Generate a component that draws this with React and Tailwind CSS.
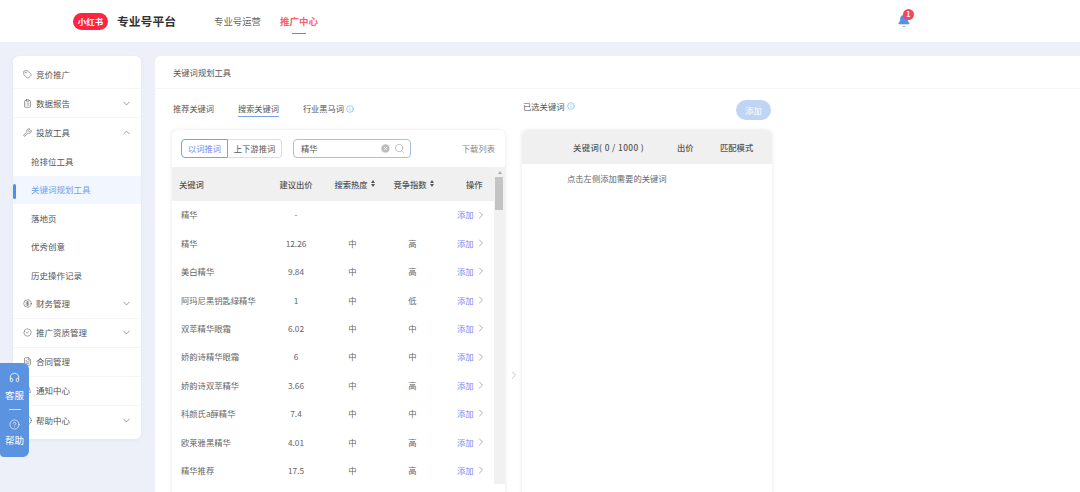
import { ChevronDown, ChevronRight, ChevronUp, Search, Headphones, CircleHelp, Info, Tag, ClipboardList, Wrench, CircleDollarSign, BadgeCheck, FileText, Bell, CircleX } from 'lucide-react';

const rows = [
  ['精华', '-', '', ''],
  ['精华', '12.26', '中', '高'],
  ['美白精华', '9.84', '中', '高'],
  ['阿玛尼黑钥匙绿精华', '1', '中', '低'],
  ['双萃精华眼霜', '6.02', '中', '中'],
  ['娇韵诗精华眼霜', '6', '中', '中'],
  ['娇韵诗双萃精华', '3.66', '中', '高'],
  ['科颜氏a醇精华', '7.4', '中', '中'],
  ['欧莱雅黑精华', '4.01', '中', '高'],
  ['精华推荐', '17.5', '中', '高'],
];

function MenuItem({ icon: Icon, label, arrow, noLine }) {
  return (
    <div className={`flex h-[29px] items-center pl-[10px] pr-[9px] text-[#555] ${noLine ? '' : 'border-b border-[#f4f5f8]'}`}>
      <Icon size={9} strokeWidth={1.5} className="mr-[4px] shrink-0" />
      <span className="flex-1">{label}</span>
      {arrow === 'down' && <ChevronDown size={11} strokeWidth={1.4} className="text-[#666]" />}
      {arrow === 'up' && <ChevronUp size={11} strokeWidth={1.4} className="text-[#666]" />}
    </div>
  );
}

function SubItem({ label, active }) {
  return (
    <div className={`relative flex h-[28.5px] items-center pl-[18px] ${active ? 'bg-[#f2f6fe] text-[#6f9ee8]' : 'text-[#555]'}`}>
      {active && <span className="absolute left-0 top-[8px] h-[15px] w-[3px] rounded-sm bg-[#4f8fe8]" />}
      {label}
    </div>
  );
}

function Sidebar() {
  return (
    <aside className="h-[383px] w-[128px] shrink-0 rounded-md bg-white pt-[4px] text-[8.5px] shadow-[0_1px_4px_rgba(40,60,110,0.06)]">
      <MenuItem icon={Tag} label="竞价推广" />
      <MenuItem icon={ClipboardList} label="数据报告" arrow="down" />
      <MenuItem icon={Wrench} label="投放工具" arrow="up" noLine />
      <SubItem label="抢排位工具" />
      <SubItem label="关键词规划工具" active />
      <SubItem label="落地页" />
      <SubItem label="优秀创意" />
      <SubItem label="历史操作记录" />
      <MenuItem icon={CircleDollarSign} label="财务管理" arrow="down" />
      <MenuItem icon={BadgeCheck} label="推广资质管理" arrow="down" />
      <MenuItem icon={FileText} label="合同管理" />
      <MenuItem icon={Bell} label="通知中心" />
      <MenuItem icon={CircleHelp} label="帮助中心" arrow="down" noLine />
    </aside>
  );
}

function SortIcon() {
  return (
    <span className="flex flex-col gap-[1px]">
      <span className="h-0 w-0 border-x-[2.5px] border-b-[3px] border-x-transparent border-b-[#555]" />
      <span className="h-0 w-0 border-x-[2.5px] border-t-[3px] border-x-transparent border-t-[#555]" />
    </span>
  );
}

function KeywordTable() {
  return (
    <div className="flex">
      <div className="w-[322px]">
        <div className="grid h-[33.5px] grid-cols-[98px_52px_61px_59px_52px] items-center bg-[#f0f0f0] font-medium text-[#555]">
          <span className="pl-[7px]">关键词</span>
          <span className="text-center">建议出价</span>
          <span className="flex items-center justify-center gap-[3px] pl-[4px]">搜索热度<SortIcon /></span>
          <span className="flex items-center justify-center gap-[3px] pl-[2px]">竞争指数<SortIcon /></span>
          <span className="pl-[24px]">操作</span>
        </div>
        {rows.map((r, i) => (
          <div key={i} className="grid h-[28.4px] grid-cols-[98px_52px_61px_59px_52px] items-center text-[#666]">
            <span className="whitespace-nowrap pl-[9px]">{r[0]}</span>
            <span className="text-center">{r[1]}</span>
            <span className="text-center">{r[2]}</span>
            <span className="text-center">{r[3]}</span>
            <span className="flex items-center pl-[15px] text-[#7b86f2]">
              添加
              <ChevronRight size={12} strokeWidth={1.2} className="ml-[1px] text-[#777]" />
            </span>
          </div>
        ))}
      </div>
      <div className="relative w-[11px] bg-[#f1f1f1]">
        <span className="absolute left-[3.5px] top-[4px] h-0 w-0 border-x-[2px] border-b-[3px] border-x-transparent border-b-[#aaa]" />
        <div className="absolute left-[1px] top-[10px] h-[33px] w-[8px] bg-[#c4c4c4]" />
      </div>
    </div>
  );
}

export default function App() {
  return (
    <div className="relative flex h-[492px] w-[1080px] flex-col overflow-hidden bg-[#edf0f8] font-['Noto_Sans_CJK_SC','Liberation_Sans',sans-serif]">
      <header className="flex h-[42px] shrink-0 items-center bg-white pl-[73px]">
        <div className="flex h-[17px] w-[35px] items-center justify-center rounded-full bg-[#ff2442] text-[8.5px] font-bold text-white">小红书</div>
        <div className="ml-[9px] text-[11.8px] font-bold text-[#333]">专业号平台</div>
        <div className="ml-[38px] text-[9.4px] text-[#666]">专业号运营</div>
        <div className="relative ml-[19px] text-[9.5px] font-bold text-[#ff5a6e]">
          推广中心
          <span className="absolute left-[12px] top-[19px] h-[1.5px] w-[14px] bg-[#ff4d61]" />
        </div>
        <div className="relative ml-[579px]">
          <Bell size={14} fill="#5b8fe6" strokeWidth={1.2} className="text-[#5b8fe6]" />
          <span className="absolute left-[6px] top-[-5px] flex h-[11px] w-[11px] items-center justify-center rounded-full bg-[#f5475c] text-[7px] font-bold text-white">1</span>
        </div>
      </header>

      <div className="flex flex-1 gap-[14px] pl-[13px] pt-[14px]">
        <Sidebar />

        <main className="flex-1 rounded-tl-md bg-white text-[8.3px]">
          <div className="flex h-[33px] items-center border-b border-[#f4f5f8] pl-[18px] text-[#555]">关键词规划工具</div>

          <div className="flex pl-[17px] pt-[11px]">
            <div className="w-[350px]">
              <div className="flex h-[30px] gap-[24px] pl-[1px] text-[8.2px] text-[#555]">
                <span className="h-[17px] leading-[17px]">推荐关键词</span>
                <span className="h-[17px] border-b border-[#7ba4e6] leading-[17px]">搜索关键词</span>
                <span className="flex h-[17px] items-center gap-[2px]">
                  行业黑马词
                  <Info size={8} strokeWidth={2} className="text-[#6fb6ee]" />
                </span>
              </div>

              <div className="h-[370px] w-[333px] rounded-t-md bg-white shadow-[0_0_4px_rgba(40,60,110,0.12)]">
                <div className="flex h-[37px] items-center pl-[9px] pr-[10px]">
                  <div className="flex h-[19px]">
                    <span className="flex w-[47px] items-center justify-center rounded-l-sm border border-[#7a9df0] text-[#7b86f2]">以词推词</span>
                    <span className="flex w-[54px] items-center justify-center rounded-r-sm border border-l-0 border-[#ddd] text-[#555]">上下游推词</span>
                  </div>
                  <div className="ml-[11px] flex h-[19px] w-[118px] items-center rounded-sm border border-[#a9bfea] pl-[7px] pr-[5px] text-[#555]">
                    <span className="flex-1">精华</span>
                    <CircleX size={11} fill="#bbb" strokeWidth={1.5} className="text-white" />
                    <Search size={11} strokeWidth={1.5} className="ml-[3px] text-[#aaa]" />
                  </div>
                  <span className="ml-auto text-[#888]">下载列表</span>
                </div>
                <KeywordTable />
              </div>
            </div>

            <div className="w-[250px]">
              <div className="flex h-[30px] items-start justify-between">
                <span className="flex items-center gap-[2px] pl-[1px] text-[#555]">
                  已选关键词
                  <Info size={8} strokeWidth={2} className="text-[#6fb6ee]" />
                </span>
                <button className="mr-[1px] h-[20px] w-[35px] rounded-full bg-[#bfd5f5] text-white">添加</button>
              </div>
              <div className="h-[370px] rounded-t-md bg-white shadow-[0_0_4px_rgba(40,60,110,0.12)]">
                <div className="flex h-[34px] items-center rounded-t-md bg-[#f0f0f0] pl-[51px] font-medium text-[#555]">
                  <span className="w-[104px] tracking-[0.4px]">关键词( 0 / 1000 )</span>
                  <span className="w-[43px]">出价</span>
                  <span>匹配模式</span>
                </div>
                <div className="pl-[45px] pt-[8px] text-[#666]">点击左侧添加需要的关键词</div>
              </div>
            </div>
          </div>
        </main>
      </div>

      <ChevronRight size={12} strokeWidth={1} className="absolute left-[508px] top-[369px] text-[#888]" />

      <div className="absolute left-0 top-[363px] flex h-[94px] w-[29px] flex-col items-center rounded-r-md rounded-bl-sm bg-[#5b93e0] pt-[9px] text-[9.5px] text-white">
        <Headphones size={11} strokeWidth={1.8} className="shrink-0" />
        <span className="mt-[5px]">客服</span>
        <span className="mt-[7px] h-px w-[12px] shrink-0 bg-white/70" />
        <CircleHelp size={11} strokeWidth={1.4} className="mt-[9px] shrink-0" />
        <span className="mt-[3px]">帮助</span>
      </div>
    </div>
  );
}
